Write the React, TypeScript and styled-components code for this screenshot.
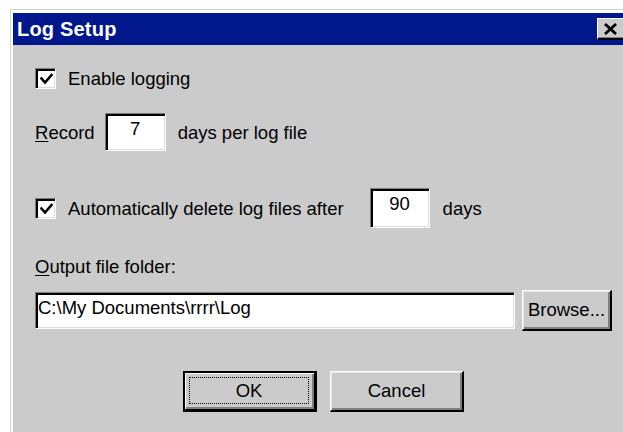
import styled, { createGlobalStyle } from "styled-components";

const GlobalStyle = createGlobalStyle`
  html, body {
    margin: 0;
    padding: 0;
    background: #ffffff;
    overflow: hidden;
  }
  body {
    font-family: "Liberation Sans", Arial, sans-serif;
    font-size: 18.5px;
    color: #000000;
  }
`;

const Window = styled.div`
  margin: 9px 0 0 10px;
  width: 623px;
  height: 440px;
  box-sizing: border-box;
  padding: 3px 0 0 2px;
  border-top: 1px solid #d6d6d6;
  border-left: 1px solid #d6d6d6;
  box-shadow: inset 2px 3px #ffffff;
  background: #cbcbcb;
  display: flex;
  flex-direction: column;
`;

const TitleBar = styled.div`
  height: 32px;
  flex: none;
  background: #00188b;
  display: flex;
  align-items: center;
  justify-content: space-between;
  padding-left: 4px;
`;

const Title = styled.span`
  color: #ffffff;
  font-weight: bold;
  font-size: 20px;
  letter-spacing: 0.2px;
`;

const CloseButton = styled.button`
  width: 36px;
  height: 22px;
  margin-right: 0;
  padding: 0 8px 0 0;
  flex: none;
  box-sizing: border-box;
  background: #cbcbcb;
  border-style: solid;
  border-width: 1px 2px 2px 1px;
  border-color: #ffffff #000000 #000000 #ffffff;
  box-shadow: inset -1px -1px #808080;
  display: flex;
  align-items: center;
  justify-content: center;
`;

const Body = styled.div`
  display: flex;
  flex-direction: column;
  padding: 21px 21px 0 22px;
`;

const Row = styled.div<{ $top?: number; $height?: number; $center?: boolean }>`
  display: flex;
  align-items: center;
  justify-content: ${(p) => (p.$center ? "center" : "flex-start")};
  margin-top: ${(p) => p.$top ?? 0}px;
  height: ${(p) => (p.$height ? `${p.$height}px` : "auto")};
`;

const Text = styled.span<{ $left?: number }>`
  margin-left: ${(p) => p.$left ?? 0}px;
  white-space: nowrap;
  line-height: 21px;
`;

const Key = styled.span`
  text-decoration: underline;
  text-underline-offset: 2px;
`;

const CheckBox = styled.span`
  width: 21px;
  height: 21px;
  flex: none;
  box-sizing: border-box;
  background: #ffffff;
  border-style: solid;
  border-width: 1px;
  border-color: #7b7b7b #ffffff #ffffff #7b7b7b;
  box-shadow: inset 2px 2px #000000, inset -1px -1px #dedede;
  display: flex;
  align-items: center;
  justify-content: center;
  padding: 2px 0 0 2px;
`;

const Field = styled.div<{ $width?: number; $height: number; $centered?: boolean; $left?: number }>`
  box-sizing: border-box;
  width: ${(p) => (p.$width ? `${p.$width}px` : "auto")};
  flex: ${(p) => (p.$width ? "none" : "1")};
  height: ${(p) => p.$height}px;
  margin-left: ${(p) => p.$left ?? 0}px;
  background: #ffffff;
  border-style: solid;
  border-width: 1px;
  border-color: #7b7b7b #ffffff #ffffff #7b7b7b;
  box-shadow: inset 2px 2px #000000, inset -1px -1px #dedede;
  padding: 4px 4px 0 ${(p) => (p.$centered ? 4 : 2)}px;
  text-align: ${(p) => (p.$centered ? "center" : "left")};
  line-height: 21px;
  white-space: nowrap;
  overflow: hidden;
`;

const Button = styled.button<{ $width: number; $isDefault?: boolean; $left?: number }>`
  width: ${(p) => p.$width}px;
  height: 41px;
  margin-left: ${(p) => p.$left ?? 0}px;
  box-sizing: border-box;
  padding: 0;
  flex: none;
  background: #cbcbcb;
  font-family: "Liberation Sans", Arial, sans-serif;
  font-size: 18.5px;
  color: #000000;
  display: flex;
  align-items: stretch;
  border-style: solid;
  ${(p) =>
    p.$isDefault
      ? `
    border-width: 2px 3px 3px 2px;
    border-color: #000000;
    box-shadow: inset 1px 1px #ffffff, inset -2px -2px #808080;
  `
      : `
    border-width: 1px 2px 2px 1px;
    border-color: #ffffff #000000 #000000 #ffffff;
    box-shadow: inset 1px 1px #e4e4e4, inset -2px -2px #808080;
  `}
`;

const Caption = styled.span<{ $focused?: boolean }>`
  flex: 1;
  display: flex;
  align-items: center;
  justify-content: center;
  margin: ${(p) => (p.$focused ? "4px 5px 5px 4px" : "0")};
  border: ${(p) => (p.$focused ? "1px dotted #000000" : "none")};
`;

const CheckMark = () => (
  <svg width="13" height="13" viewBox="0 0 13 13">
    <path d="M1.5 5.5 L5 9.5 L11.5 2" fill="none" stroke="#000" strokeWidth="2.6" strokeLinecap="square" />
  </svg>
);

const CloseGlyph = () => (
  <svg width="15" height="12" viewBox="0 0 15 12">
    <path d="M2 1 L13 11 M13 1 L2 11" stroke="#000" strokeWidth="2.8" />
  </svg>
);

export default function App() {
  return (
    <>
      <GlobalStyle />
      <Window>
        <TitleBar>
          <Title>Log Setup</Title>
          <CloseButton aria-label="Close">
            <CloseGlyph />
          </CloseButton>
        </TitleBar>
        <Body>
          <Row $height={24}>
            <CheckBox>
              <CheckMark />
            </CheckBox>
            <Text $left={12}>Enable logging</Text>
          </Row>

          <Row $top={23} $height={38}>
            <Text>
              <Key>R</Key>ecord
            </Text>
            <Field $width={61} $height={38} $centered $left={10}>
              7
            </Field>
            <Text $left={12}>days per log file</Text>
          </Row>

          <Row $top={37} $height={40}>
            <CheckBox>
              <CheckMark />
            </CheckBox>
            <Text $left={12}>Automatically delete log files after</Text>
            <Field $width={60} $height={40} $centered $left={26}>
              90
            </Field>
            <Text $left={13}>days</Text>
          </Row>

          <Row $top={28} $height={20}>
            <Text>
              <Key>O</Key>utput file folder:
            </Text>
          </Row>

          <Row $top={14} $height={41}>
            <Field $height={37}>C:\My Documents\rrrr\Log</Field>
            <Button $width={90} $left={7}>
              <Caption>Browse...</Caption>
            </Button>
          </Row>

          <Row $top={40} $height={41} $center>
            <Button $width={134} $isDefault>
              <Caption $focused>OK</Caption>
            </Button>
            <Button $width={134} $left={13}>
              <Caption>Cancel</Caption>
            </Button>
          </Row>
        </Body>
      </Window>
    </>
  );
}
